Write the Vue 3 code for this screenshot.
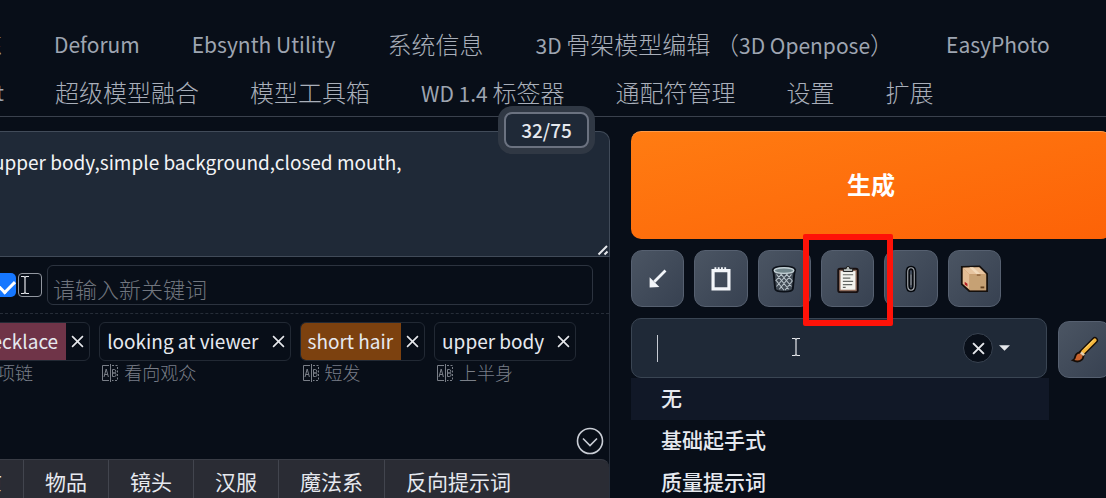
<script setup>
import { ref } from 'vue'

const cjk = /([\u3000-\u9fff\uff00-\uffef]+)/
const split = (s) => s.split(cjk).filter(Boolean).map((t) => ({ t, zh: cjk.test(t) }))

const tabRows = [
  ['训练', 'Deforum', 'Ebsynth Utility', '系统信息', '3D 骨架模型编辑 （3D Openpose）', 'EasyPhoto'],
  ['t', '超级模型融合', '模型工具箱', 'WD 1.4 标签器', '通配符管理', '设置', '扩展'],
].map((row) => row.map(split))

const prompt = ref('upper body,simple background,closed mouth,')
const tags = [
  { text: 'necklace', zh: '项链', tone: 'rose' },
  { text: 'looking at viewer', zh: '看向观众', tone: '' },
  { text: 'short hair', zh: '短发', tone: 'amber' },
  { text: 'upper body', zh: '上半身', tone: '' },
]
const groups = ['质量', '物品', '镜头', '汉服', '魔法系', '反向提示词']
const styles = ['无', '基础起手式', '质量提示词']
</script>

<template>
  <div class="page">
    <nav class="tabs">
      <div v-for="(row, r) in tabRows" :key="r" class="tab-row" :class="{ wide: r === 0 }">
        <button v-for="(tab, i) in row" :key="i" type="button" class="tab" :class="{ cut: i === 0 }">
          <span v-for="(p, k) in tab" :key="k" :class="p.zh ? 'zh' : 'la'">{{ p.t }}</span>
        </button>
      </div>
    </nav>

    <main class="main">
      <section class="left">
        <div class="prompt-box">
          <textarea v-model="prompt" class="prompt" aria-label="提示词"></textarea>
          <span class="counter">32/75</span>
          <svg class="grip" viewBox="0 0 12 12"><path d="M1.5 10.5 10 2M7.5 10.5 10.500 7.500" /></svg>
        </div>
        <div class="panel">
          <div class="entry">
            <input type="checkbox" class="tick" checked aria-label="启用" />
            <input type="checkbox" class="tick empty" aria-label="全选" />
            <input type="text" class="keyword" placeholder="请输入新关键词" aria-label="请输入新关键词" />
            <svg class="ibeam small" viewBox="0 0 10 20"><path d="M1 1.500h3l1 1 1-1h3M5 2.500v15M1 18.500h3l1-1 1 1h3" /></svg>
          </div>
          <div class="tags">
            <div v-for="tag in tags" :key="tag.text" class="tag-item">
              <div class="tag" :class="tag.tone">
                <span class="tag-text">{{ tag.text }}</span>
                <button type="button" class="tag-x" aria-label="删除">
                  <svg viewBox="0 0 12 12"><path d="M1 1l10 10M11 1 1 11" /></svg>
                </button>
              </div>
              <div class="trans">
                <svg viewBox="0 0 18 18">
                  <path d="M8 1.500H1.500v15H8M9.500 0v18" />
                  <path d="M11 1.500h5.500v15H11" stroke-dasharray="2 1.500" />
                  <path d="M3 13 5.200 5 7.400 13M3.600 10.500h3.200M11.500 5.500v7h2q1.600 0 1.600-1.800T13.500 9h-2 1.800q1.500 0 1.500-1.700t-1.500-1.800z" />
                </svg>
                <span>{{ tag.zh }}</span>
              </div>
            </div>
          </div>
          <button type="button" class="expand" aria-label="展开">
            <svg viewBox="0 0 28 28"><circle cx="14" cy="14" r="12.500" /><path d="m7 11.500 7 7 7-7" /></svg>
          </button>
          <div class="groups">
            <button v-for="(g, i) in groups" :key="g" type="button" :class="{ first: i === 0 }">{{ g }}</button>
          </div>
        </div>
      </section>

      <section class="right">
        <button type="button" class="generate">生成</button>
        <div class="tools">
          <button type="button" aria-label="读取参数">
            <svg viewBox="0 0 30 30"><path d="M23 6 11 18" stroke="#f3f6fa" stroke-width="3" /><path d="M6 24V13l10.500 10.500z" fill="#f3f6fa" /></svg>
          </button>
          <button type="button" aria-label="清空提示词">
            <svg viewBox="0 0 30 30"><path d="M6.500 6h17v19.500h-17z" fill="none" stroke="#f3f6fa" stroke-width="3.400" /><path d="M8 4h14" stroke="#f3f6fa" stroke-width="3" stroke-dasharray="2 1.500" /></svg>
          </button>
          <button type="button" aria-label="垃圾桶">
            <svg viewBox="0 0 30 30">
              <path d="M3 5q1-3.500 12-3.500T27 5l-1 4.500-1.500 16q-.500 3-9.500 3t-9.500-3L4 9.500z" fill="#424b55" stroke="#0b1018" stroke-width="2" />
              <path d="m7 10 13 16M11 9l12 14M17 9l7 8M23 10 10 26M19 9 7 23M13 9l-7 8M7 17l8 10M24 17l-8 10" stroke="#b7c1c8" stroke-width="1.100" />
              <ellipse cx="15" cy="6" rx="10.500" ry="3" fill="#71858b" stroke="#c3d0d5" stroke-width="1.500" />
            </svg>
          </button>
          <button type="button" class="marked" aria-label="应用预设">
            <svg viewBox="0 0 30 30">
              <rect x="4.500" y="4" width="21" height="25" rx="2" fill="#8f6d5d" stroke="#170f10" stroke-width="2" />
              <path d="M7 6.500h16v20H7z" fill="#f4f4ef" />
              <path d="M10 7V4h3q0-2.500 2-2.500T17 4h3v3z" fill="#b9bfbd" stroke="#171717" />
              <path d="M9.500 10.500h11M9.500 14h8M9.500 17.500h11M9.500 21h10M9.500 24h3" stroke="#646864" stroke-width="1.200" />
            </svg>
          </button>
          <button type="button" aria-label="附件">
            <svg viewBox="0 0 30 30">
              <path d="M11.500 10v12q0 5 3.500 5t3.500-5V7.500Q18.500 3 15 3t-3.500 4.500V22M15 10v12" fill="none" stroke="#06090e" stroke-width="4.500" />
              <path d="M11.500 10v12q0 5 3.500 5t3.500-5V7.500Q18.500 3 15 3t-3.500 4.500V22" fill="none" stroke="#a7abb0" stroke-width="1.200" />
              <path d="M15 10v12" stroke="#6f757d" stroke-width="2" />
            </svg>
          </button>
          <button type="button" aria-label="模型">
            <svg viewBox="0 0 30 30">
              <path d="m2 2 19-.500 8 8V28H10L2 20.500z" fill="#c58a59" stroke="#14100d" stroke-width="2" />
              <path d="m3 3 17.500-.500L28 10H10z" fill="#e6c49f" />
              <path d="M10 10h18v17H10.500z" fill="#c6a174" />
              <path d="m3 3 7 7v16l-7-6z" fill="#e3bd95" />
              <path d="m10 2.500 8 7.500h4l-8-7.500z" fill="#f1d9ba" />
              <path d="M18 10h4v1.500h-4z" fill="#8c6038" />
              <path d="m5 18 3 2v3l-3-2z" fill="#b51e22" /><path d="M22 23h4v2h-4z" fill="#65421f" />
            </svg>
          </button>
        </div>
        <div class="style-row">
          <div class="combo">
            <input type="text" class="combo-input" aria-label="预设样式" />
            <span class="caret"></span>
            <svg class="ibeam" viewBox="0 0 10 20"><path d="M1 1.500h3l1 1 1-1h3M5 2.500v15M1 18.500h3l1-1 1 1h3" /></svg>
            <button type="button" class="clear" aria-label="清除">
              <svg viewBox="0 0 12 12"><path d="M1 1l10 10M11 1 1 11" /></svg>
            </button>
            <button type="button" class="arrow" aria-label="展开选项">
              <svg viewBox="0 0 12 6"><path d="M0 0h12L6 6z" /></svg>
            </button>
          </div>
          <button type="button" class="brush" aria-label="编辑样式">
            <svg viewBox="0 0 30 30">
              <path d="M11 19 25.500 4.500" stroke="#160d07" stroke-width="7" stroke-linecap="round" />
              <path d="M2 26q2-1 2.500-4Q6 17 11 18q4 3 1 7-4 4-10 1z" fill="#ca632c" stroke="#160d07" stroke-width="2" />
              <path d="M13 17 25.500 4.500" stroke="#f6b73d" stroke-width="4" stroke-linecap="round" />
              <path d="m9.500 18.500 2-2 3.500 3-2 2z" fill="#e9d1ae" />
              <path d="m15 13.500 9-9" stroke="#ffdc74" stroke-width="1" />
            </svg>
          </button>
        </div>
        <ul class="options">
          <li v-for="(s, i) in styles" :key="s" :class="{ active: i === 0 }">{{ s }}</li>
        </ul>
      </section>
    </main>
  </div>
</template>

<style>
body {
  margin: 0;
  background: #080e18;
}
</style>

<style scoped>
* {
  box-sizing: border-box;
}
.page {
  height: 100vh;
  overflow: hidden;
  padding-top: 20px;
  display: flex;
  flex-direction: column;
  background: #080e18;
  color: #e6e9ef;
  font-family: "Noto Sans CJK SC", "Noto Sans", sans-serif;
}
button {
  font: inherit;
  color: inherit;
  background: none;
  border: 0;
  padding: 0;
  margin: 0;
}
input,
textarea {
  font: inherit;
  color: inherit;
  margin: 0;
}
svg {
  display: block;
  fill: none;
}
.tabs {
  flex: none;
  border-bottom: 1px solid #3a414d;
}
.tab-row {
  display: flex;
  gap: 51px;
  height: 48px;
}
.wide {
  gap: 52px;
}
.tab {
  flex: none;
  white-space: pre;
  line-height: 48px;
  color: #a9afba;
  font-weight: 300;
}
.tab .zh {
  font-size: 24px;
}
.tab .la {
  font-size: 21px;
  font-weight: 400;
  color: #9ea5b1;
}
.cut {
  width: 4px;
  overflow: hidden;
  display: flex;
  justify-content: flex-end;
}
.wide .cut {
  width: 2px;
}
.main {
  flex: 1;
  min-height: 0;
  margin-top: 14px;
  display: grid;
  grid-template-columns: minmax(0, 610fr) minmax(0, 475fr);
  grid-template-rows: minmax(0, 1fr);
  gap: 21px;
}
.left {
  display: flex;
  flex-direction: column;
  min-height: 0;
}
.prompt-box {
  position: relative;
  flex: none;
}
.prompt {
  display: block;
  width: 100%;
  height: 126px;
  padding: 16px 16px 16px 0;
  border: 1px solid #414b59;
  border-left: 0;
  border-radius: 0 10px 0 0;
  background: #1f2937;
  font-size: 19px;
  line-height: 28px;
  text-indent: -7px;
  color: #f3f4f6;
  resize: none;
  outline: 0;
}
.counter {
  position: absolute;
  right: 21px;
  top: -19px;
  width: 85px;
  height: 36px;
  border: 2px solid #6b7280;
  border-radius: 8px;
  background: #1f2937;
  box-shadow: 0 0 0 6px #303844;
  text-align: center;
  font-size: 19px;
  font-weight: 500;
  line-height: 31px;
}
.grip {
  position: absolute;
  right: 1px;
  bottom: 1px;
  width: 12px;
  height: 12px;
  stroke: #e5e7eb;
  stroke-width: 2;
}
.panel {
  position: relative;
  flex: 1;
  min-height: 0;
  display: flex;
  flex-direction: column;
  border-right: 1px solid #272e3a;
}
.entry {
  position: relative;
  flex: none;
  display: flex;
  align-items: center;
  height: 57px;
  padding-right: 16px;
  border-bottom: 1px dashed #262d38;
}
.tick {
  appearance: none;
  flex: none;
  width: 24px;
  height: 24px;
  border-radius: 5px;
  margin-left: -8px;
  background: #1677ff;
  position: relative;
}
.tick:checked::after {
  content: "";
  position: absolute;
  left: 9px;
  top: 4px;
  width: 8px;
  height: 13px;
  border: solid #fff;
  border-width: 0 3px 3px 0;
  transform: rotate(45deg);
}
.empty {
  margin-left: 2px;
  background: none;
  border: 1px solid #9297a0;
  border-radius: 4px;
}
.keyword {
  flex: 1;
  min-width: 0;
  height: 40px;
  margin-left: 5px;
  padding: 6px 5px 0;
  border: 1px solid #2c333f;
  border-radius: 6px;
  background: none;
  font-size: 22px;
  font-weight: 300;
}
.keyword::placeholder {
  color: #70757e;
  opacity: 1;
}
.ibeam {
  width: 10px;
  height: 20px;
  stroke: #e5e7eb;
  stroke-width: 1.2;
}
.small {
  position: absolute;
  left: 20px;
  top: 18px;
}
.tags {
  display: flex;
  gap: 9px;
  margin: 8px 0 0 -28px;
}
.tag {
  display: flex;
  height: 39px;
  border: 1px solid #222934;
  border-radius: 6px;
  overflow: hidden;
}
.tag-text {
  padding: 0 8px 0 7px;
  font-size: 19px;
  line-height: 35px;
  white-space: nowrap;
}
.rose .tag-text {
  background: #6f3448;
}
.amber .tag-text {
  background: #7c410f;
}
.tag-x {
  width: 23px;
  display: flex;
  align-items: center;
  justify-content: center;
}
.tag-x svg,
.clear svg {
  width: 13px;
  height: 13px;
  stroke: #e5e7eb;
  stroke-width: 1.5;
}
.trans {
  display: flex;
  align-items: center;
  gap: 5px;
  padding-left: 2px;
  font-size: 18px;
  font-weight: 300;
  line-height: 20px;
  color: #7a7f88;
}
.trans svg {
  width: 18px;
  height: 18px;
  margin-top: 3px;
  stroke: #7a7f88;
}
.expand {
  position: absolute;
  right: 5px;
  bottom: 43px;
  width: 28px;
  height: 28px;
}
.expand svg {
  stroke: #c9cdd5;
  stroke-width: 1.6;
}
.groups {
  display: flex;
  flex: none;
  height: 39px;
  margin-top: auto;
  background: #2a2c34;
  border-top: 1px solid #393c45;
  border-radius: 0 8px 0 0;
  overflow: hidden;
}
.groups button {
  flex: none;
  padding: 3px 21px 0;
  font-size: 21px;
  line-height: 34px;
  border-left: 1px solid #42454e;
}
.groups .first {
  width: 23px;
  padding: 3px 21px 0 0;
  border: 0;
  display: flex;
  justify-content: flex-end;
  overflow: hidden;
}
.right {
  min-width: 0;
  margin-right: -5px;
}
.generate {
  display: block;
  width: 100%;
  height: 108px;
  padding-bottom: 4px;
  border-radius: 10px;
  border-top: 1px solid #ff9a47;
  background: linear-gradient(to bottom right, #ff7c12, #fd6207);
  color: #fff;
  font-size: 24px;
  font-weight: 700;
}
.tools {
  width: 370px;
  margin-top: 11px;
  display: grid;
  grid-template-columns: repeat(6, 1fr);
  gap: 10px;
}
.tools button,
.brush {
  position: relative;
  height: 57px;
  border: 1px solid #566070;
  border-radius: 11px;
  background: linear-gradient(to bottom right, #4b5563, #374151);
  display: flex;
  align-items: center;
  justify-content: center;
}
.tools svg,
.brush svg {
  width: 28px;
  height: 28px;
}
.marked::after {
  content: "";
  position: absolute;
  inset: -17px -20px -20px -19px;
  border: 6px solid #ff1208;
  border-radius: 2px;
  z-index: 2;
}
.style-row {
  display: flex;
  align-items: flex-end;
  gap: 11px;
  margin-top: 11px;
}
.combo {
  position: relative;
  flex: 1;
  display: flex;
  align-items: center;
  height: 60px;
  padding: 0 36px 0 20px;
  border: 1px solid #3a4553;
  border-radius: 10px;
  background: #1f2937;
}
.combo-input {
  flex: 1;
  min-width: 0;
  border: 0;
  outline: 0;
  background: none;
}
.caret {
  position: absolute;
  left: 25px;
  top: 16px;
  width: 1px;
  height: 27px;
  background: #c6cbd3;
}
.combo .ibeam {
  position: absolute;
  left: 159px;
  top: 18px;
}
.clear {
  width: 30px;
  height: 30px;
  border: 1px solid #394351;
  border-radius: 50%;
  background: #090f19;
  display: flex;
  align-items: center;
  justify-content: center;
}
.clear svg {
  stroke-width: 1.8;
}
.arrow {
  margin-left: 6px;
}
.arrow svg {
  width: 11px;
  height: 6px;
  fill: #e5e7eb;
}
.brush {
  width: 53px;
  flex: none;
}
.options {
  list-style: none;
  margin: 0 62px 0 0;
  padding: 0;
  font-size: 21px;
  font-weight: 500;
}
.options li {
  height: 42px;
  padding-left: 30px;
  line-height: 38px;
}
.options .active {
  background: #111827;
}
</style>
